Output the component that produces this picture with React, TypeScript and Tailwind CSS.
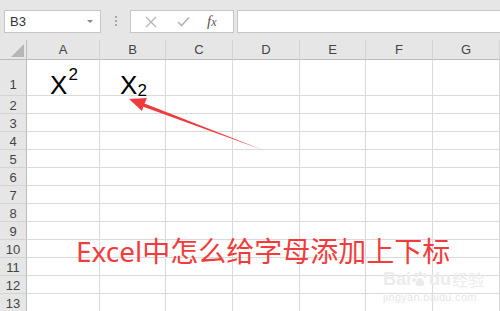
import React from 'react';

const cols = [
  { label: 'A', w: 73 },
  { label: 'B', w: 66 },
  { label: 'C', w: 67 },
  { label: 'D', w: 67 },
  { label: 'E', w: 66 },
  { label: 'F', w: 67 },
  { label: 'G', w: 67 },
];

const rows = Array.from({ length: 13 }, (_, i) => i + 1);

function FormulaBar() {
  return (
    <div className="flex h-[40px] items-start bg-[#e6e6e6] pt-[10px]">
      <div className="ml-[4px] flex h-[23px] w-[97px] items-center justify-between border border-[#c6c6c6] bg-white pl-[5px] pr-[7px] text-[13px] text-[#333]">
        <span>B3</span>
        <span className="h-0 w-0 border-x-[3px] border-t-[3px] border-x-transparent border-t-[#888]" />
      </div>
      <div className="flex w-[29px] flex-col items-center gap-[2px] pt-[6px]">
        <span className="h-[2px] w-[2px] bg-[#a8a8a8]" />
        <span className="h-[2px] w-[2px] bg-[#a8a8a8]" />
        <span className="h-[2px] w-[2px] bg-[#a8a8a8]" />
      </div>
      <div className="flex h-[23px] w-[104px] items-center border border-[#c6c6c6] bg-white">
        <svg className="ml-[14px]" width="12" height="12" viewBox="0 0 12 12">
          <path d="M1 1 L11 11 M11 1 L1 11" stroke="#b4b4b4" strokeWidth="1.3" fill="none" />
        </svg>
        <svg className="ml-[20px]" width="13" height="11" viewBox="0 0 13 11">
          <path d="M1 6 L4.5 9.5 L12 1.5" stroke="#b4b4b4" strokeWidth="1.6" fill="none" />
        </svg>
        <span className="ml-[17px] font-['Liberation_Serif',serif] text-[15px] italic text-[#555]">
          f<span className="text-[12px]">x</span>
        </span>
      </div>
      <div className="ml-[3px] h-[23px] flex-1 border-y border-l border-[#c6c6c6] bg-white" />
    </div>
  );
}

function Grid() {
  return (
    <div className="grid grid-cols-[27px_73px_66px_67px_67px_66px_67px_67px] grid-rows-[20px_36px_repeat(12,18px)] font-['Liberation_Sans',Arial,sans-serif]">
      <div className="relative border-b border-r border-[#bcbcbc] bg-[#e6e6e6]">
        <svg className="absolute bottom-[2px] right-[2px]" width="13" height="13" viewBox="0 0 13 13">
          <polygon points="13,0 13,13 0,13" fill="#b6b6b6" />
        </svg>
      </div>
      {cols.map((c) => (
        <div
          key={c.label}
          className="flex items-center justify-center border-b border-r border-b-[#bcbcbc] border-r-[#d4d4d4] bg-[#e6e6e6] text-[13px] text-[#444]"
        >
          {c.label}
        </div>
      ))}
      {rows.map((r) => (
        <React.Fragment key={r}>
          <div className="flex items-center justify-center border-b border-r border-b-[#d4d4d4] border-r-[#bcbcbc] bg-[#e6e6e6] pt-[2px] text-[13px] text-[#444]">
            {r === 1 ? <span className="self-end pb-[1px]">1</span> : r}
          </div>
          {cols.map((c, ci) => (
            <div key={c.label} className="border-b border-r border-[#dadada] bg-white">
              {r === 1 && ci === 0 && (
                <div className="flex justify-center pl-[2px] pt-[12px] text-[26px] leading-none text-black">
                  <span>
                    X<sup className="-top-[14px] ml-[1px] text-[17px]">2</sup>
                  </span>
                </div>
              )}
              {r === 1 && ci === 1 && (
                <div className="flex justify-center pl-[2px] pt-[12px] text-[26px] leading-none text-black">
                  <span>
                    X<sub className="top-[2px] text-[17px]">2</sub>
                  </span>
                </div>
              )}
            </div>
          ))}
        </React.Fragment>
      ))}
    </div>
  );
}

function Arrow() {
  return (
    <svg className="absolute left-0 top-0" width="500" height="311" viewBox="0 0 500 311">
      <polygon
        points="129,99 147,98 144.5,103.6 263,150 143.3,106.8 142,111"
        fill="#f2393c"
      />
    </svg>
  );
}

function Watermark() {
  return (
    <div className="absolute left-[383px] top-[270px] flex flex-col font-['Liberation_Sans',Arial,sans-serif] text-[#ebebeb]">
      <div className="flex items-center text-[18px] font-bold leading-none">
        <span>Bai</span>
        <svg width="16" height="16" viewBox="0 0 16 16" className="mx-[1px]">
          <ellipse cx="4" cy="4" rx="2" ry="2.5" fill="#ebebeb" />
          <ellipse cx="8.5" cy="2.5" rx="2" ry="2.3" fill="#ebebeb" />
          <ellipse cx="13" cy="4.5" rx="2" ry="2.5" fill="#ebebeb" />
          <ellipse cx="2" cy="9" rx="1.8" ry="2.2" fill="#ebebeb" />
          <path d="M8 7 C5 7 3 12 4 14 C5 15.5 11 15.5 12 14 C13 12 11 7 8 7 Z" fill="#ebebeb" />
        </svg>
        <span>du</span>
        <span className="ml-[1px] font-['Noto_Sans_CJK_SC',sans-serif] text-[16px] font-normal">经验</span>
      </div>
      <div className="mt-[4px] text-[11px] leading-none tracking-[0.3px] text-[#e6e6e6]">jingyan.baidu.com</div>
    </div>
  );
}

export default function App() {
  return (
    <div className="relative h-[311px] w-[500px] overflow-hidden bg-white font-['Liberation_Sans',Arial,sans-serif]">
      <FormulaBar />
      <Grid />
      <Arrow />
      <div className="absolute left-[76px] top-[237px] whitespace-nowrap font-['Noto_Sans',_'Noto_Sans_CJK_SC',sans-serif] text-[28px] leading-none text-[#f23c3c]">
        Excel中怎么给字母添加上下标
      </div>
      <Watermark />
    </div>
  );
}
